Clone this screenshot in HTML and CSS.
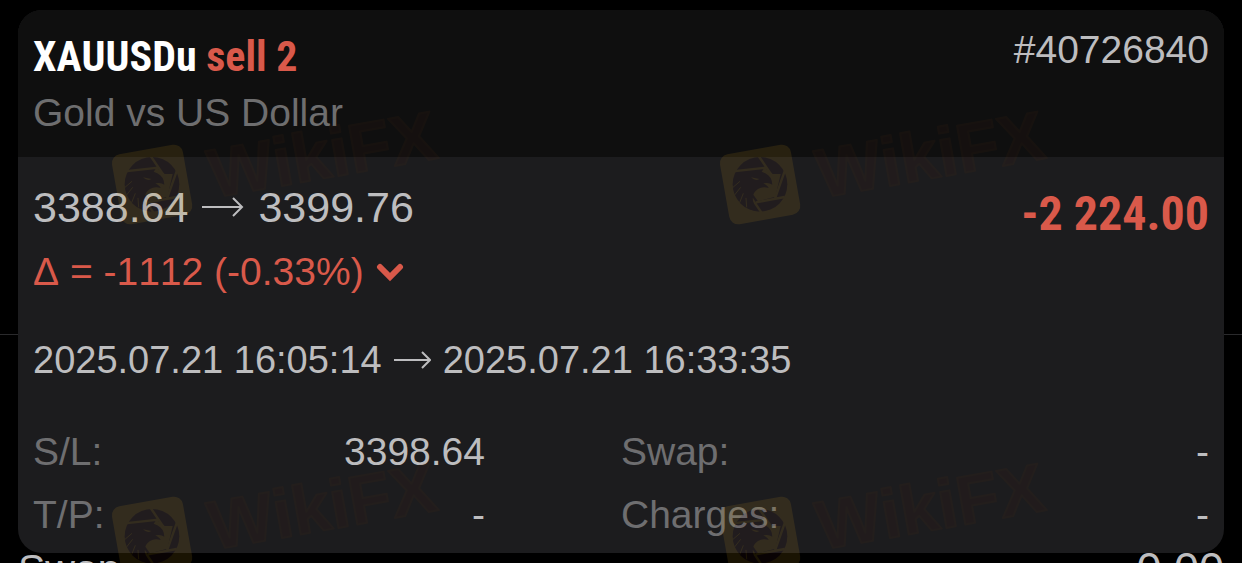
FILE: index.html
```html
<!DOCTYPE html>
<html lang="en">
<head>
    <meta charset="UTF-8">
    <meta name="viewport" content="width=device-width, initial-scale=1.0">
    <title>XAUUSDu sell 2</title>
    <link rel="stylesheet" href="styles.css">
</head>
<body>

    <main class="page">
        <div class="divider"></div>

        <section class="card">
            <header class="card-header">
                <div class="symbol">
                    <h1 class="title">XAUUSDu <span class="loss">sell 2</span></h1>
                    <p class="description">Gold vs US Dollar</p>
                </div>
                <span class="ticket">#40726840</span>
            </header>

            <div class="card-body">
                <div class="result">
                    <div class="prices">
                        <p class="price-line">
                            <span>3388.64</span>
                            <svg class="arrow" width="42" height="20" viewBox="0 0 42 20"><path d="M0 10H40M31 1L40 10L31 19"/></svg>
                            <span>3399.76</span>
                        </p>
                        <p class="delta loss">
                            <span>&Delta; = -1112 (-0.33%)</span>
                            <svg class="chevron" width="28" height="20" viewBox="0 0 28 20"><path d="M4 5L14 15L24 5"/></svg>
                        </p>
                    </div>
                    <strong class="amount loss">-2 224.00</strong>
                </div>

                <p class="time-line">
                    <span>2025.07.21 16:05:14</span>
                    <svg class="arrow" width="37" height="18" viewBox="0 0 37 18"><path d="M0 9H36M28 1L36 9L28 17"/></svg>
                    <span>2025.07.21 16:33:35</span>
                </p>

                <dl class="details">
                    <div class="detail"><dt>S/L:</dt><dd>3398.64</dd></div>
                    <div class="detail"><dt>Swap:</dt><dd>-</dd></div>
                    <div class="detail"><dt>T/P:</dt><dd>-</dd></div>
                    <div class="detail"><dt>Charges:</dt><dd>-</dd></div>
                </dl>
            </div>
        </section>

        <div class="summary">
            <span>Swap</span>
            <span class="summary-value">0.00</span>
        </div>

        <!-- repeated watermark above the content -->
        <svg class="watermark" aria-hidden="true">
            <defs>
                <pattern id="mark" width="608" height="352" patternUnits="userSpaceOnUse">
                    <g transform="translate(152 184) rotate(-10)">
                        <rect class="mark-gold" x="-36" y="-35" width="72" height="71" rx="9"/>
                    </g>
                    <g transform="translate(92 100) scale(.3333)">
                        <circle class="mark-dark" cx="180" cy="253" r="82"/>
                        <path class="mark-gold" d="M193 203L218 222L242 222L226 290L174 304L150 270Z"/>
                        <path class="mark-gap" d="M176 168L218 230M98 214L200 203M256 208L225 296M254 291L168 307M156 296L186 340"/>
                        <path class="mark-dark" d="M99 240Q124 216 154 215Q178 210 196 220Q216 230 217 254Q206 246 190 250Q204 258 206 264Q188 258 174 267Q158 278 158 294Q159 312 172 334Q138 328 120 306Q98 282 99 240Z"/>
                        <path class="mark-gold" d="M153 232L178 237Q166 245 153 232Z"/>
                        <path class="mark-cut" d="M99 262L120 244M103 286L122 262M119 308L130 280M140 322L138 294"/>
                    </g>
                    <text class="mark-text" transform="translate(213 198) rotate(-10)">WikiFX</text>
                </pattern>
            </defs>
            <rect width="100%" height="100%" fill="url(#mark)"/>
        </svg>
    </main>

</body>
</html>
```
FILE: styles.css
```css
* {
    box-sizing: border-box;
}
body {
    margin: 0;
    background: #000;
    color: #bdbdbf;
    font-family: "Liberation Sans", Arial, sans-serif;
    font-size: 39px;
    line-height: 50px;
    font-kerning: none;
}
h1, p, dl, dd {
    margin: 0;
}
.page {
    position: relative;
    height: 100vh;
    padding: 10px 18px 0;
    overflow: hidden;
}
.divider {
    position: absolute;
    top: 334px;
    left: 0;
    right: 0;
    height: 1px;
    background: #2a2a2c;
}
.card {
    position: relative;
    border-radius: 24px;
    background: #1c1c1e;
    overflow: hidden;
}
.card-header {
    display: flex;
    justify-content: space-between;
    align-items: flex-start;
    padding: 15px 15px 19px;
    background: #0f0f0f;
}
.symbol {
    padding-top: 6px;
}
.title {
    color: #fff;
    font-family: "Roboto Condensed", Roboto, sans-serif;
    font-size: 42px;
    font-weight: bold;
    line-height: 52px;
}
.description {
    margin-top: 5px;
    color: #6e6e6f;
}
.loss {
    color: #d9594a;
}
.card-body {
    padding: 25px 15px 13px;
}
.result {
    display: flex;
    justify-content: space-between;
    align-items: flex-start;
}
.price-line, .time-line, .delta {
    display: flex;
    align-items: center;
}
.price-line {
    gap: 14px;
    font-size: 43px;
}
.delta {
    gap: 12px;
    margin-top: 15px;
}
.time-line {
    gap: 12px;
    margin-top: 38px;
    font-size: 38px;
}
.arrow {
    fill: none;
    stroke: currentColor;
    stroke-width: 2;
}
.chevron {
    fill: none;
    stroke: currentColor;
    stroke-width: 6;
    stroke-linecap: round;
}
.amount {
    font-family: "Roboto Condensed", Roboto, sans-serif;
    font-size: 48px;
    line-height: 64px;
}
.details {
    display: grid;
    grid-template-columns: 1fr 1fr;
    row-gap: 13px;
    margin-top: 42px;
}
.detail {
    display: flex;
    justify-content: space-between;
}
.detail:nth-child(odd) {
    padding-right: 136px;
}
.detail dt {
    color: #6e6e70;
}
.summary {
    display: flex;
    justify-content: space-between;
    font-size: 41px;
    line-height: 32px;
}
.summary-value {
    font-size: 45px;
}
.watermark {
    position: absolute;
    top: 0;
    left: 0;
    width: 100%;
    height: 100%;
    opacity: 0.12;
    pointer-events: none;
}
.mark-gold {
    fill: #d7a01e;
}
.mark-dark {
    fill: #4b1e23;
}
.mark-gap {
    fill: none;
    stroke: #d7a01e;
    stroke-width: 7;
}
.mark-cut {
    fill: none;
    stroke: #d7a01e;
    stroke-width: 3;
}
.mark-text {
    fill: #461914;
    stroke: #552d14;
    stroke-width: 2;
    stroke-linejoin: round;
    font-size: 69px;
    font-weight: bold;
}
```
